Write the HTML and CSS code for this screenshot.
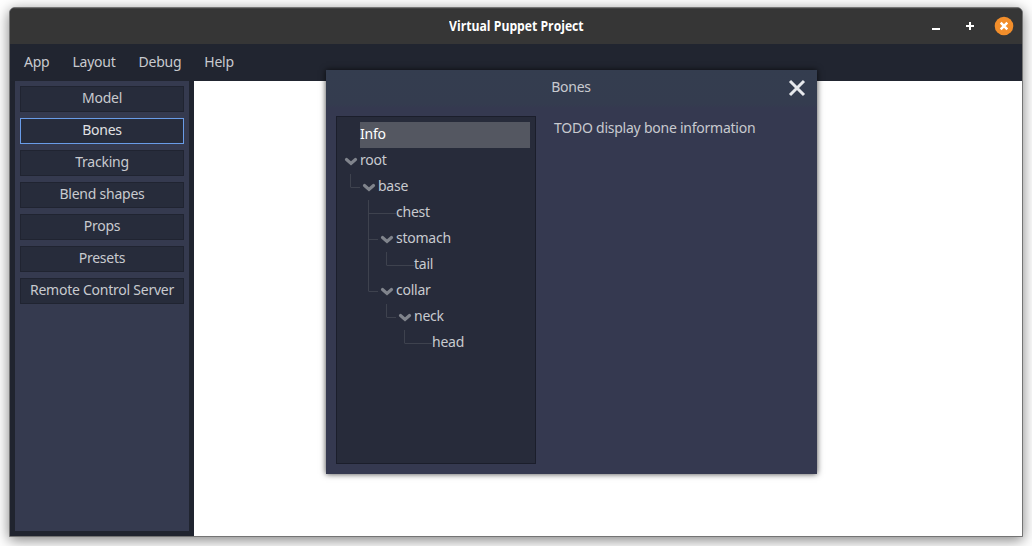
FILE: index.html
```html
<!DOCTYPE html>
<html lang="en">
<head>
<meta charset="utf-8">
<title>Virtual Puppet Project</title>
<link rel="stylesheet" href="styles.css">
</head>
<body>
<div class="window">
  <header class="titlebar">
    <span class="window-title">Virtual Puppet Project</span>
    <svg class="controls" width="90" height="24" viewBox="0 0 90 24">
      <path d="M4 15h8M38 12h8M42 8v8" fill="none" stroke="#fff" stroke-width="2"/>
      <circle cx="76" cy="12" r="9.3" fill="#f28e2b"/>
      <path d="M72.7 8.7l6.6 6.6M79.3 8.7l-6.6 6.6" stroke="#fff" stroke-width="2.5"/>
    </svg>
  </header>
  <nav class="menubar">
    <span>App</span><span>Layout</span><span>Debug</span><span>Help</span>
  </nav>
  <main class="workspace">
    <aside class="sidebar">
      <button class="item">Model</button>
      <button class="item active">Bones</button>
      <button class="item">Tracking</button>
      <button class="item">Blend shapes</button>
      <button class="item">Props</button>
      <button class="item">Presets</button>
      <button class="item">Remote Control Server</button>
    </aside>
    <section class="viewport"></section>
  </main>
</div>
<div class="dialog">
  <header class="dialog-head">
    <span class="dialog-title">Bones</span>
    <svg class="close" width="18" height="18" viewBox="0 0 18 18"><path d="M2 2l14 14M16 2L2 16" stroke="#e6e8ec" stroke-width="3"/></svg>
  </header>
  <div class="dialog-body">
    <div class="tree">
      <svg class="guides" width="198" height="346" viewBox="337 117 198 346">
        <path class="line" d="M350.5 174V187.5M351 187.5H360M368.5 200V291.5M369 213.5H396M369 239.5H378M369 291.5H378M386.5 252V265.5M387 265.5H414M386.5 304V317.5M387 317.5H396M404.5 330V343.5M405 343.5H432"/>
        <path class="arrow" d="M346.5 159.5l4.5 4 4.5-4M364.5 185.500l4.500 4 4.500-4M382.500 237.500l4.500 4 4.500-4M382.500 289.500l4.500 4 4.500-4M400.500 315.500l4.500 4 4.500-4"/>
      </svg>
      <div class="row d0 selected">Info</div>
      <div class="row d0">root</div>
      <div class="row d1">base</div>
      <div class="row d2">chest</div>
      <div class="row d2">stomach</div>
      <div class="row d3">tail</div>
      <div class="row d2">collar</div>
      <div class="row d3">neck</div>
      <div class="row d4">head</div>
    </div>
    <p class="details">TODO display bone information</p>
  </div>
</div>
</body>
</html>
```
FILE: styles.css
```css
* { box-sizing: border-box; }
body {
  margin: 0;
  width: 1032px;
  height: 546px;
  overflow: hidden;
  padding: 7px 9px 9px;
  background: #fff;
  font: 14px/20px "Noto Sans", "Open Sans", sans-serif;
  letter-spacing: -.24px;
  color: #c8cacf;
}
.window {
  width: 1014px;
  height: 530px;
  display: flex;
  flex-direction: column;
  border: 1px solid #747474;
  border-radius: 6px 6px 0 0;
  background: #20242f;
  overflow: hidden;
  box-shadow: 0 3px 14px rgba(0, 0, 0, .5);
}
.titlebar {
  height: 36px;
  flex: none;
  display: flex;
  justify-content: center;
  align-items: center;
  position: relative;
  background: #363636;
  border-top: 1px solid #444;
}
.window-title {
  font-family: "Open Sans", sans-serif;
  font-weight: 700;
  letter-spacing: 0;
  color: #fff;
  padding-bottom: 1px;
  transform: scaleX(.87);
}
.controls { position: absolute; right: 4px; top: 5px; }
.menubar {
  height: 37px;
  flex: none;
  display: flex;
  gap: 23px;
  padding: 8px 14px;
  background: #212530;
}
.workspace { flex: 1; display: flex; min-height: 0; }
.sidebar {
  width: 174px;
  margin: 0 5px 5px;
  padding: 5px;
  display: flex;
  flex-direction: column;
  gap: 6px;
  background: #353a4f;
}
.item {
  height: 26px;
  padding: 0 0 2px;
  border: 1px solid #202431;
  background: #272c3b;
  color: inherit;
  font: inherit;
  letter-spacing: inherit;
  line-height: 22px;
  white-space: nowrap;
}
.active { border-color: #699ce8; color: #e0e1e4; }
.viewport { flex: 1; background: #fff; }
.dialog {
  position: absolute;
  left: 326px;
  top: 70px;
  width: 491px;
  height: 404px;
  padding: 0 10px 10px;
  display: flex;
  flex-direction: column;
  background: linear-gradient(#343d4f 0, #343c4f 34px, #353950 38px);
  box-shadow: 0 0 6px rgba(0, 0, 0, .75);
}
.dialog-head {
  height: 46px;
  flex: none;
  display: flex;
  justify-content: center;
  padding-top: 7px;
  position: relative;
}
.dialog-title { padding-right: 1px; }
.close { position: absolute; right: 1px; top: 9px; }
.dialog-body { flex: 1; display: flex; gap: 18px; }
.tree {
  width: 200px;
  padding: 5px 5px 5px 23px;
  position: relative;
  background: #272b3a;
  border: 1px solid #1b1e2b;
}
.guides { position: absolute; left: 0; top: 0; }
.line { fill: none; stroke: #3e424e; }
.arrow { fill: none; stroke: #80848c; stroke-width: 3.1; stroke-linecap: round; }
.row { height: 26px; line-height: 24px; position: relative; }
.selected { background: #545761; color: #fff; }
.d1 { padding-left: 18px; }
.d2 { padding-left: 36px; }
.d3 { padding-left: 54px; }
.d4 { padding-left: 72px; }
.details { margin: 2px 0 0; white-space: nowrap; }
```
